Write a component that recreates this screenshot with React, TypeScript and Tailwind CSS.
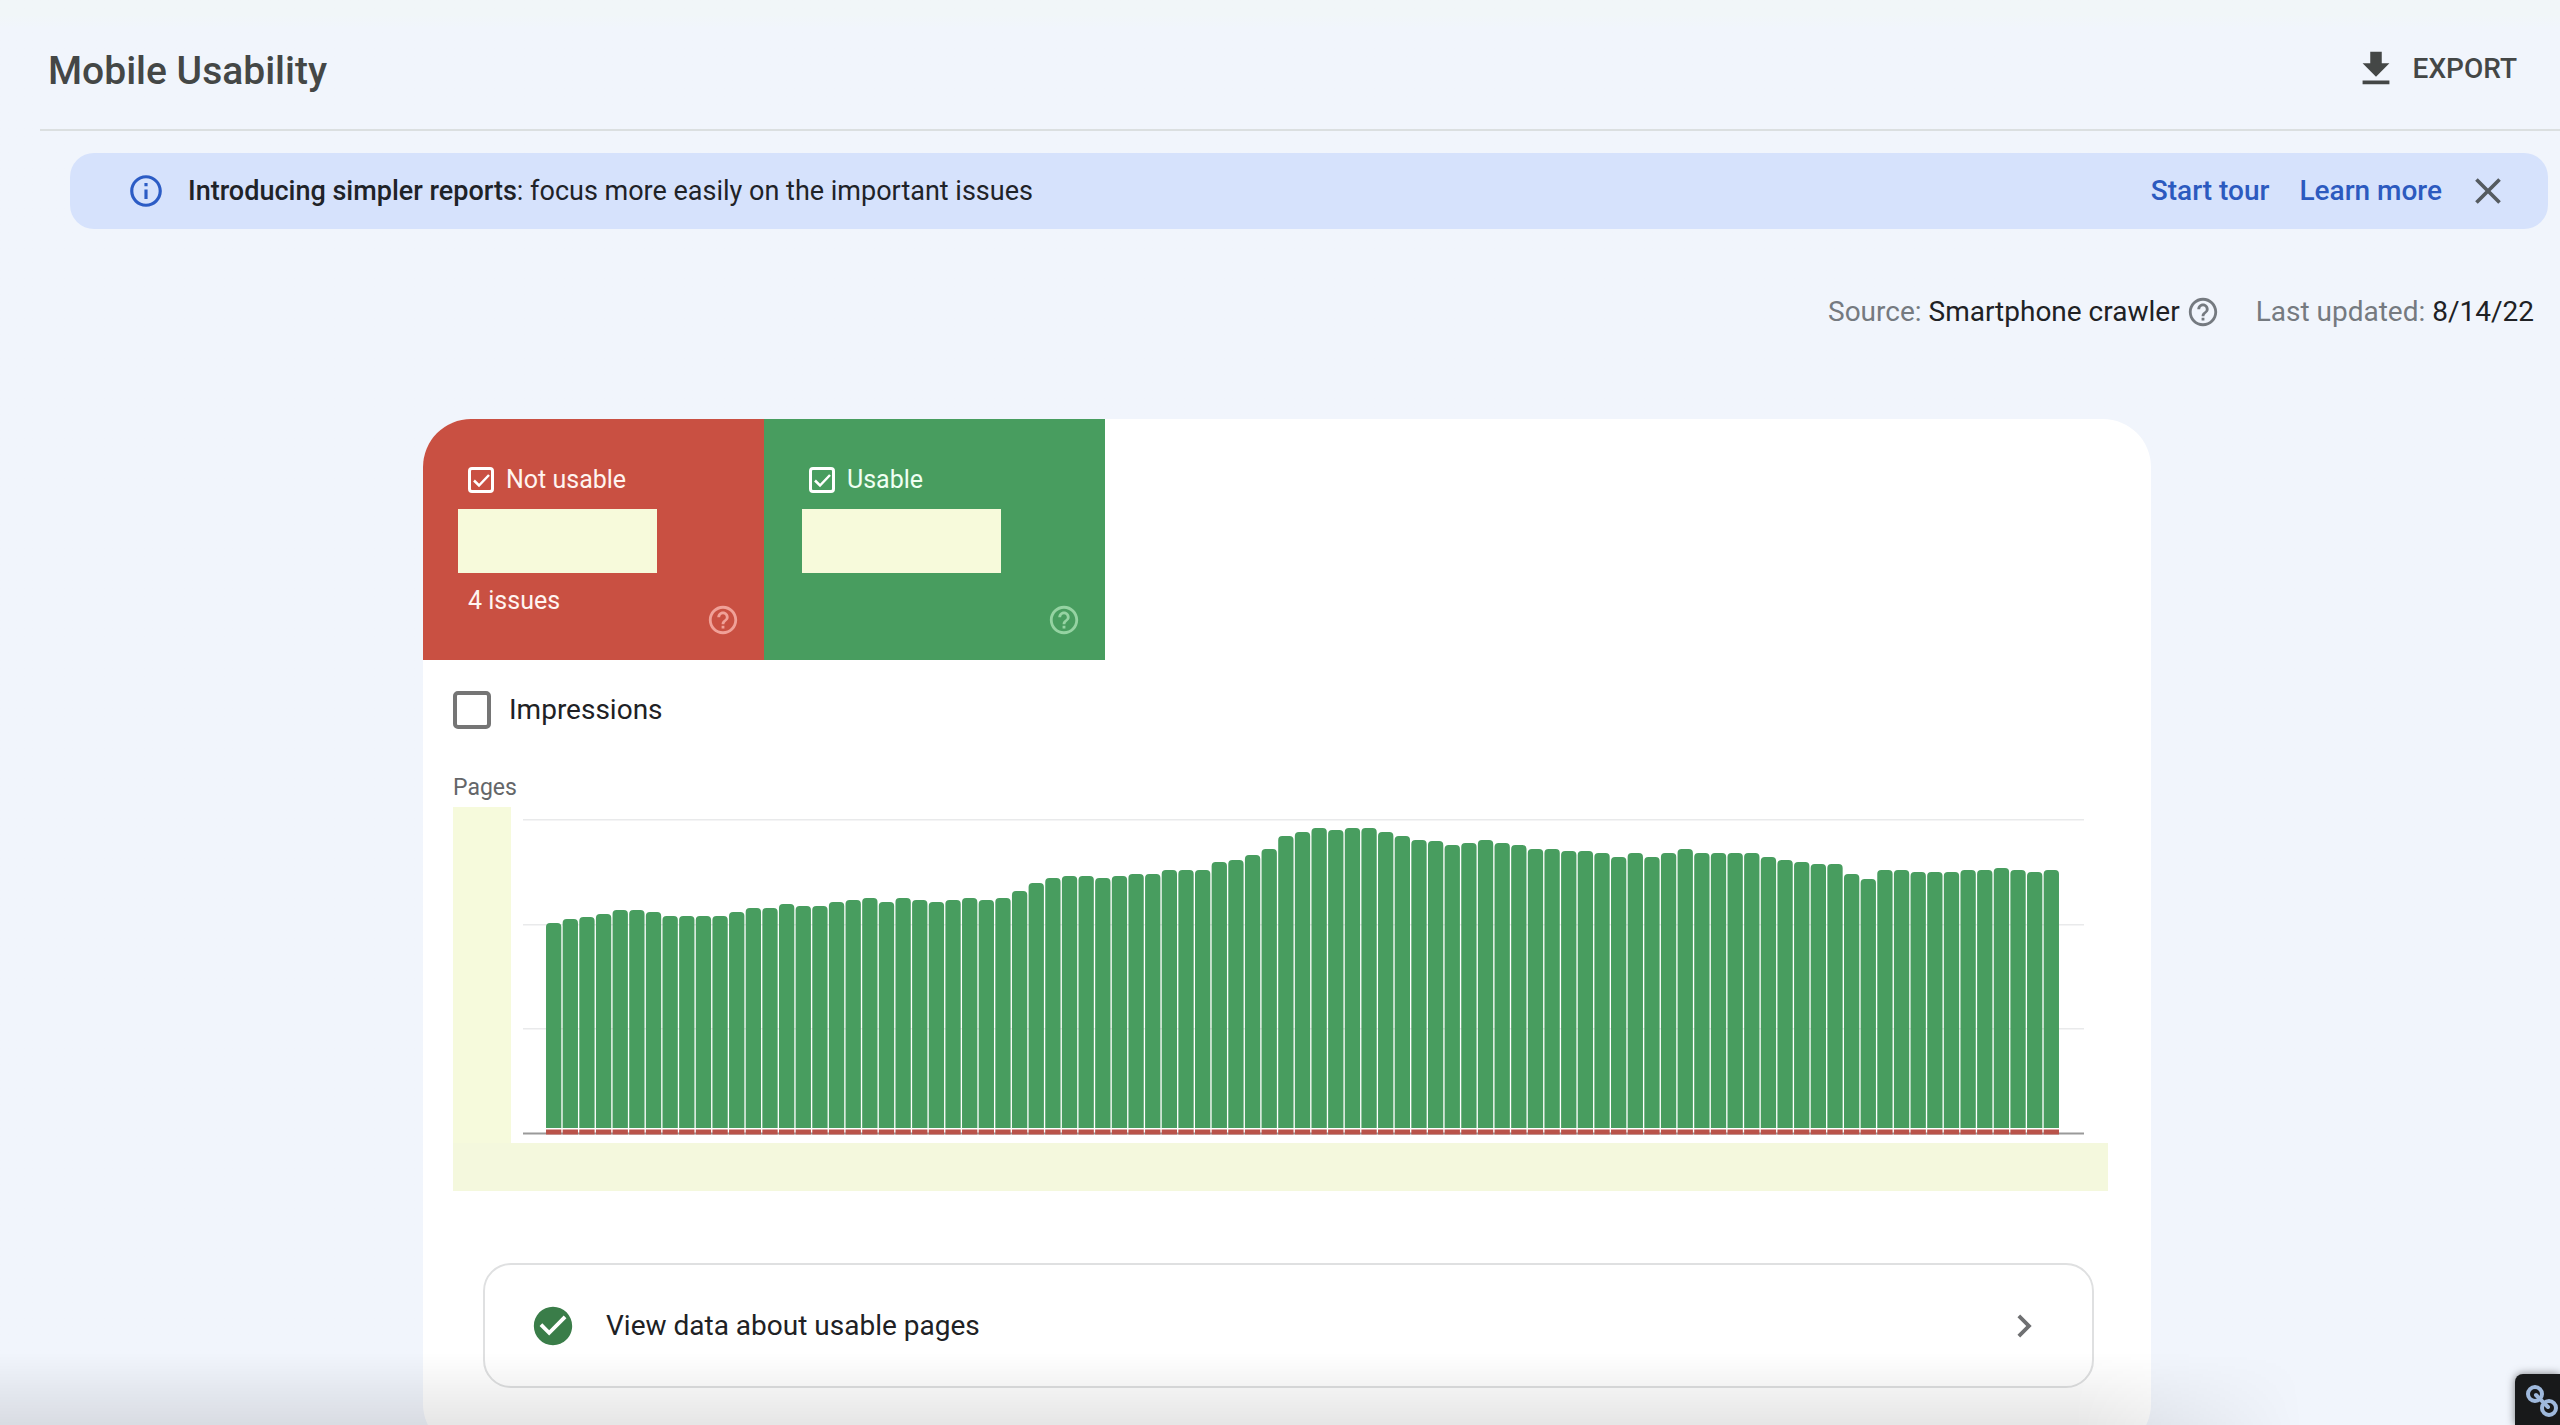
import { useState } from 'react';

import {
  MdCheckCircle,
  MdChevronRight,
  MdClose,
  MdFileDownload,
  MdHelpOutline,
  MdInfoOutline,
} from 'react-icons/md';

// Height of each day's column in chart units
const usablePages = [
  205, 209, 211, 214, 218, 218, 216, 212, 212, 212, 212, 216, 220, 220, 224,
  222, 222, 226, 228, 230, 226, 230, 228, 226, 228, 230, 228, 230, 237, 245,
  250, 252, 252, 250, 252, 254, 254, 258, 258, 258, 266, 268, 273, 279, 292,
  296, 300, 298, 300, 300, 296, 292, 288, 287, 283, 285, 288, 285, 283, 279,
  279, 277, 277, 275, 271, 275, 271, 275, 279, 275, 275, 275, 275, 271, 268,
  266, 264, 264, 254, 249, 258, 258, 256, 256, 256, 258, 258, 260, 258, 256,
  258,
];

const CHART_WIDTH = 1560;
const CHART_HEIGHT = 318;
const BAR_START = 23;
const BAR_STEP = 16.63;
const BAR_WIDTH = 15.3;
const GREEN_BOTTOM = 311;

const barPath = (x: number, height: number) => {
  const top = GREEN_BOTTOM - height;
  const right = x + BAR_WIDTH;
  return `M${x} ${GREEN_BOTTOM}V${top + 4}q0 -4 4 -4H${right - 4}q4 0 4 4V${GREEN_BOTTOM}Z`;
};

const Header = () => (
  <header className="ml-10 flex h-[131px] items-center justify-between border-b-2 border-[#dbdfe0] pl-2 pr-[43px] pt-2">
    <h1 className="pt-1 text-[39px] font-medium leading-[48px] text-[#444746]">
      Mobile Usability
    </h1>
    <button className="flex items-center gap-3.5 text-[28px] font-medium leading-9 text-[#444746]">
      <MdFileDownload className="size-[46px]" />
      <span>EXPORT</span>
    </button>
  </header>
);

const Banner = ({ onClose }: { onClose: () => void }) => (
  <div className="ml-[70px] mr-3 mt-[22px] flex h-[76px] items-center rounded-3xl bg-[#d6e2fc] pl-[57px] pr-[38px] text-[27px] leading-9">
    <MdInfoOutline className="mr-[23px] size-[38px] text-[#2c5cc5]" />
    <p className="flex-1 text-[#1f2328]">
      <strong className="font-medium">Introducing simpler reports</strong>: focus
      more easily on the important issues
    </p>
    <a href="#tour" className="mr-[30px] text-[28px] font-medium text-[#2c5abf]">
      Start tour
    </a>
    <a href="#learn" className="mr-6 text-[28px] font-medium text-[#2c5abf]">
      Learn more
    </a>
    <button aria-label="Close" onClick={onClose}>
      <MdClose className="size-11 text-[#555b60]" />
    </button>
  </div>
);

const Meta = () => (
  <div className="mt-[65px] flex h-9 items-center justify-end pr-[26px] text-[28px] leading-9 text-[#757a80]">
    <span>
      Source: <span className="text-[#202124]">Smartphone crawler</span>
    </span>
    <button aria-label="About the source" className="ml-1.5 mr-9">
      <MdHelpOutline className="size-[34px]" />
    </button>
    <span>
      Last updated: <span className="text-[#202124]">8/14/22</span>
    </span>
  </div>
);

type CheckBoxProps = {
  id: string;
  checked: boolean;
  onChange: () => void;
};

const TileCheckBox = ({ id, checked, onChange }: CheckBoxProps) => (
  <span className="grid size-[26px]">
    <input
      id={id}
      type="checkbox"
      checked={checked}
      onChange={onChange}
      className="col-start-1 row-start-1 size-full appearance-none rounded-[4px] border-[3px] border-white"
    />
    {checked && (
      <svg
        viewBox="0 0 26 26"
        className="pointer-events-none col-start-1 row-start-1 size-full"
        fill="none"
        stroke="#fff"
        strokeWidth="2.5"
      >
        <path d="M6 13.500L11 18.500L21 8" />
      </svg>
    )}
  </span>
);

type TileProps = {
  id: string;
  label: string;
  note?: string;
  className: string;
  valueClassName: string;
  iconClassName: string;
};

const Tile = ({
  id,
  label,
  note,
  className,
  valueClassName,
  iconClassName,
}: TileProps) => {
  const [checked, setChecked] = useState(true);

  return (
    <div className={`flex h-[241px] w-[341px] flex-col pt-[45px] ${className}`}>
      <div className="flex h-8 items-center gap-3 pl-[45px]">
        <TileCheckBox
          id={id}
          checked={checked}
          onChange={() => setChecked(!checked)}
        />
        <label htmlFor={id} className="text-[25px] leading-8">
          {label}
        </label>
      </div>
      <div className={`mt-[13px] h-16 w-[199px] bg-[#f7fadb] ${valueClassName}`} />
      <div className="flex items-start justify-between pl-[45px] pr-6 pt-3">
        <span className="text-[25px] leading-8">{note}</span>
        <button aria-label={`About ${label}`} className="mt-[18px]">
          <MdHelpOutline className={`size-[34px] ${iconClassName}`} />
        </button>
      </div>
    </div>
  );
};

const Chart = () => (
  <div className="w-full pl-[30px] pr-[43px]">
    <p className="text-[23px] leading-8 text-[#646669]">Pages</p>
    <div className="mt-[3px] flex">
      <div className="w-[58px] bg-[#f6fadc]" />
      <div className="flex-1 pb-2 pl-3 pr-6 pt-2.5">
        <svg
          viewBox={`0 0 ${CHART_WIDTH} ${CHART_HEIGHT}`}
          preserveAspectRatio="none"
          className="h-[318px] w-full"
          role="img"
          aria-label="Usable and not usable pages per day"
        >
          {[2, 107, 211].map((y) => (
            <rect key={y} x="0" y={y} width={CHART_WIDTH} height="1.500" fill="#e9eaeb" />
          ))}
          <rect x="0" y="315.500" width={CHART_WIDTH} height="2" fill="#9a9a9a" />
          {usablePages.map((height, i) => (
            <g key={i}>
              <path d={barPath(BAR_START + i * BAR_STEP, height)} fill="#489d5f" />
              <rect
                x={BAR_START + i * BAR_STEP}
                y="312.500"
                width={BAR_WIDTH}
                height="5"
                fill="#b9534a"
              />
            </g>
          ))}
        </svg>
      </div>
    </div>
    <div className="h-12 bg-[#f4f8dd]" />
  </div>
);

const App = () => {
  const [showBanner, setShowBanner] = useState(true);
  const [impressions, setImpressions] = useState(false);

  return (
    <div className="relative h-screen overflow-hidden bg-[#f1f5fc] bg-linear-to-b from-[#f1f6f8] from-1% to-[#f1f5fc] to-2% font-['Roboto',sans-serif]">
      <Header />
      {showBanner && <Banner onClose={() => setShowBanner(false)} />}
      <Meta />
      <main className="mt-[89px] pl-3.5">
        <section className="mx-auto w-full max-w-[1728px] overflow-hidden rounded-[48px] bg-white pb-16">
          <div className="flex">
            <Tile
              id="not-usable"
              label="Not usable"
              note="4 issues"
              className="bg-[#c95042] text-[#fff4f0]"
              valueClassName="ml-[35px]"
              iconClassName="text-[#f0a198]"
            />
            <Tile
              id="usable"
              label="Usable"
              className="bg-[#489d5f] text-[#effff2]"
              valueClassName="ml-[38px]"
              iconClassName="text-[#95d3a2]"
            />
          </div>
          <div className="mt-[31px] flex items-center gap-[18px] pl-[30px]">
            <input
              id="impressions"
              type="checkbox"
              checked={impressions}
              onChange={() => setImpressions(!impressions)}
              className="size-[38px] appearance-none rounded-[5px] border-4 border-[#757575] checked:bg-[#757575]"
            />
            <label htmlFor="impressions" className="text-[28px] leading-9 text-[#202124]">
              Impressions
            </label>
          </div>
          <div className="mt-[43px]">
            <Chart />
          </div>
          <button className="ml-[60px] mt-[72px] flex h-[125px] w-[calc(100%-117px)] items-center rounded-[28px] border-2 border-[#dfe0e1] pl-[45px] pr-[45px] text-[28px] leading-9 text-[#202124]">
            <MdCheckCircle className="mr-[30px] size-[46px] text-[#3a7d49]" />
            <span className="flex-1 text-left">View data about usable pages</span>
            <MdChevronRight className="size-[46px] text-[#6f7072]" />
          </button>
        </section>
      </main>
      <div className="pointer-events-none absolute bottom-0 left-0 h-[72px] w-[90%] bg-linear-to-b from-black/0 to-black/10 mask-r-from-90%" />
      <button
        aria-label="Copy link"
        className="absolute bottom-0 right-0 h-[51px] w-[45px] rounded-tl-lg bg-[#18191a] shadow-[0_0_8px_rgba(0,0,0,0.5)]"
      >
        <svg viewBox="0 0 45 51" className="size-full" fill="none" stroke="#9fb9dc">
          <circle cx="20" cy="20" r="7" strokeWidth="4" />
          <circle cx="34" cy="34" r="7" strokeWidth="4" />
          <path d="M21 21L33 33" strokeWidth="4" strokeLinecap="round" />
        </svg>
      </button>
    </div>
  );
};

export default App;
